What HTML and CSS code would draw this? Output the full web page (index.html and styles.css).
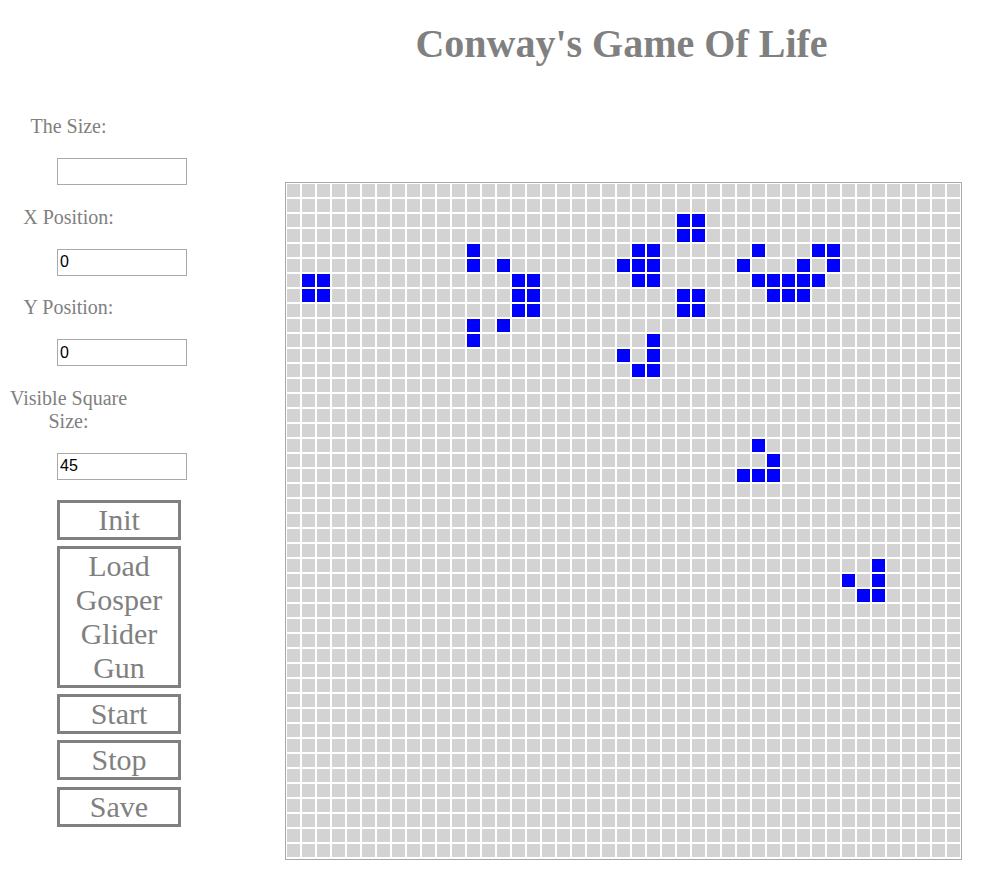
FILE: index.html
```html
<!DOCTYPE html>
<html lang="en">
<head>
<meta charset="utf-8">
<title>Conway's Game Of Life</title>
<link rel="stylesheet" href="styles.css">
</head>
<body>
<div class="page">
  <aside class="controls">
    <div class="field">
      <label class="field-label" for="size">The Size:</label>
      <input class="field-input" id="size" type="text" value="">
    </div>
    <div class="field">
      <label class="field-label" for="xpos">X Position:</label>
      <input class="field-input" id="xpos" type="text" value="0">
    </div>
    <div class="field">
      <label class="field-label" for="ypos">Y Position:</label>
      <input class="field-input" id="ypos" type="text" value="0">
    </div>
    <div class="field field-last">
      <label class="field-label" for="vsize">Visible Square Size:</label>
      <input class="field-input" id="vsize" type="text" value="45">
    </div>
    <div class="actions">
      <button class="btn" type="button">Init</button>
      <button class="btn" type="button">Load Gosper Glider Gun</button>
      <button class="btn" type="button">Start</button>
      <button class="btn" type="button">Stop</button>
      <button class="btn btn-last" type="button">Save</button>
    </div>
  </aside>
  <main class="board-area">
    <h1 class="title">Conway's Game Of Life</h1>
    <div class="board" id="board"></div>
  </main>
</div>
<script src="script.js"></script>
</body>
</html>
```
FILE: styles.css
```css
body {
  margin: 0;
  background: #fff;
  font-family: "Liberation Serif", "Times New Roman", serif;
  color: #808080;
}

.page {
  display: flex;
  align-items: flex-start;
}

.controls {
  flex: 0 0 285px;
  box-sizing: border-box;
  padding: 115px 0 0 8px;
}

.field {
  margin-bottom: 20.5px;
}

.field-last {
  margin-bottom: 20.5px;
}

.field-label {
  display: block;
  width: 121px;
  text-align: center;
  font-size: 20px;
  line-height: 23px;
  margin-bottom: 20px;
}

.field-input {
  display: block;
  box-sizing: border-box;
  width: 130px;
  height: 27px;
  margin: 0 0 0 49px;
  padding: 0 2px;
  border: 1px solid #a9a9a9;
  background: #fff;
  color: #000;
  font: 16px "Liberation Sans", Arial, sans-serif;
}

.actions {
  display: flex;
  flex-direction: column;
  gap: 6px;
  margin-left: 49px;
  width: 124px;
}

.btn {
  box-sizing: border-box;
  width: 124px;
  margin: 0;
  padding: 0;
  border: 3px solid #808080;
  background: #fff;
  color: #808080;
  font: 30px/34px "Liberation Serif", "Times New Roman", serif;
  text-align: center;
}

.btn-last {
  margin-top: 1px;
}

.board-area {
  flex: 0 0 677px;
}

.title {
  margin: 21px 0 115px;
  padding-right: 4px;
  font-size: 40px;
  line-height: 46px;
  font-weight: bold;
  text-align: center;
}

.board {
  display: grid;
  grid-template-columns: repeat(45, 13px);
  grid-auto-rows: 13px;
  gap: 2px;
  width: max-content;
  padding: 1px 1px 2px 1px;
  border: 1px solid #a9a9a9;
}

.cell {
  background: #d3d3d3;
}

.cell.alive {
  background: #0000ff;
}
```
FILE: script.js
```js
(function () {
  var SIZE = 45;
  var alive = [
    [1,6],[2,6],[1,7],[2,7],
    [12,4],[12,5],[14,5],[15,6],[16,6],[15,7],[16,7],[15,8],[16,8],[12,9],[14,9],[12,10],
    [26,2],[27,2],[26,3],[27,3],
    [23,4],[24,4],[22,5],[23,5],[24,5],[23,6],[24,6],
    [26,7],[27,7],[26,8],[27,8],
    [24,10],[22,11],[24,11],[23,12],[24,12],
    [31,4],[35,4],[36,4],[30,5],[34,5],[36,5],[31,6],[32,6],[33,6],[34,6],[35,6],[32,7],[33,7],[34,7],
    [31,17],[32,18],[30,19],[31,19],[32,19],
    [39,25],[37,26],[39,26],[38,27],[39,27]
  ];
  var set = {};
  alive.forEach(function (p) { set[p[0] + ',' + p[1]] = true; });
  var board = document.getElementById('board');
  var frag = document.createDocumentFragment();
  for (var r = 0; r < SIZE; r++) {
    for (var c = 0; c < SIZE; c++) {
      var d = document.createElement('div');
      d.className = set[c + ',' + r] ? 'cell alive' : 'cell';
      frag.appendChild(d);
    }
  }
  board.appendChild(frag);
})();
```
